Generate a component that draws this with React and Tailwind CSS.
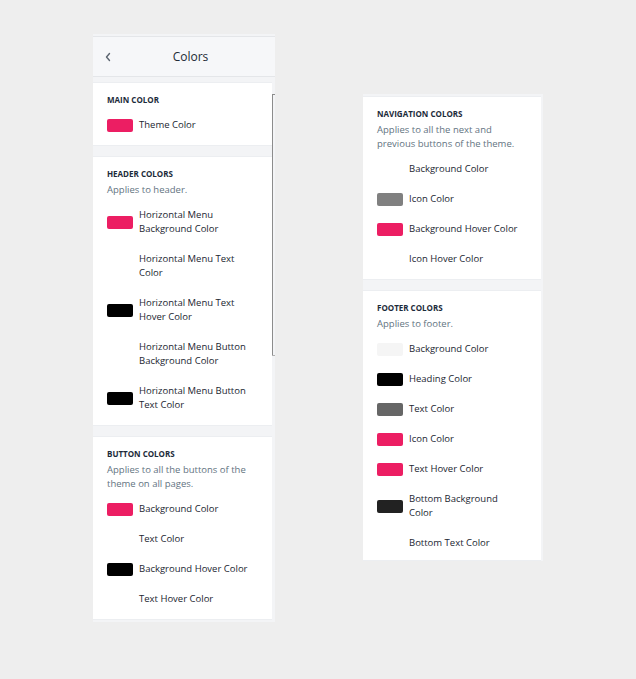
const PINK = '#ec1e63'

const leftSections = [
  {
    title: 'Main Color',
    rows: [{ label: 'Theme Color', color: PINK }],
  },
  {
    title: 'Header Colors',
    desc: 'Applies to header.',
    rows: [
      { label: 'Horizontal Menu Background Color', color: PINK },
      { label: 'Horizontal Menu Text Color', color: '#ffffff' },
      { label: 'Horizontal Menu Text Hover Color', color: '#000000' },
      { label: 'Horizontal Menu Button Background Color', color: '#ffffff' },
      { label: 'Horizontal Menu Button Text Color', color: '#000000' },
    ],
  },
  {
    title: 'Button Colors',
    desc: 'Applies to all the buttons of the theme on all pages.',
    rows: [
      { label: 'Background Color', color: PINK },
      { label: 'Text Color', color: '#ffffff' },
      { label: 'Background Hover Color', color: '#000000' },
      { label: 'Text Hover Color', color: '#ffffff' },
    ],
  },
]

const rightSections = [
  {
    title: 'Navigation Colors',
    desc: 'Applies to all the next and previous buttons of the theme.',
    rows: [
      { label: 'Background Color', color: '#ffffff' },
      { label: 'Icon Color', color: '#808080' },
      { label: 'Background Hover Color', color: PINK },
      { label: 'Icon Hover Color', color: '#ffffff' },
    ],
  },
  {
    title: 'Footer Colors',
    desc: 'Applies to footer.',
    last: true,
    rows: [
      { label: 'Background Color', color: '#f5f5f5' },
      { label: 'Heading Color', color: '#000000' },
      { label: 'Text Color', color: '#666666' },
      { label: 'Icon Color', color: PINK },
      { label: 'Text Hover Color', color: PINK },
      { label: 'Bottom Background Color', color: '#222222' },
      { label: 'Bottom Text Color', color: '#ffffff' },
    ],
  },
]

function ColorRow({ label, color }) {
  return (
    <div className="flex items-center py-[8px]">
      <span
        className="w-[26px] h-[13px] rounded-[2px] shrink-0"
        style={{ backgroundColor: color }}
      />
      <span className="ml-[6px] w-[112px] text-[9.5px] leading-[14px] text-[#1b2631]">
        {label}
      </span>
    </div>
  )
}

function Section({ title, desc, rows, last }) {
  return (
    <section
      className={`bg-white px-[14px] pt-[12px] border-y border-[#eceef1] ${last ? 'pb-[2px]' : 'pb-[5px]'}`}
    >
      <h3 className="text-[8px] leading-[10px] font-bold uppercase text-[#1c2b3a]">{title}</h3>
      {desc && (
        <p className="mt-[4px] w-[150px] text-[9.5px] leading-[14px] text-[#637381]">{desc}</p>
      )}
      <div className={desc ? 'mt-[3px]' : 'mt-[5px]'}>
        {rows.map((r) => (
          <ColorRow key={r.label} {...r} />
        ))}
      </div>
    </section>
  )
}

export default function App() {
  return (
    <div
      className="min-h-[679px] bg-[#eeeeee] flex items-start pl-[93px] pt-[34px]"
      style={{ fontFamily: '"Open Sans", "Liberation Sans", sans-serif' }}
    >
      {/* ── Left panel (scrolling settings sidebar) ── */}
      <div className="relative w-[182px] bg-[#f3f4f6] pt-[2px] pb-[2px] flex flex-col">
        <header className="h-[41px] bg-[#f6f7f9] border-t border-b border-[#e4e6e9] flex items-center">
          <svg
            className="ml-[11px] shrink-0"
            width="8"
            height="10"
            viewBox="0 0 8 10"
            fill="none"
            stroke="#5c6570"
            strokeWidth="1.4"
            strokeLinecap="round"
            strokeLinejoin="round"
          >
            <path d="M5.5 1.5 L2.5 5 L5.5 8.5" />
          </svg>
          <h2 className="flex-1 text-center pr-[6px] text-[12px] text-[#212b36]">Colors</h2>
        </header>
        <div className="pt-[5px] pr-[3px] flex flex-col gap-[10px]">
          {leftSections.map((s) => (
            <Section key={s.title} {...s} />
          ))}
        </div>
        {/* scrollbar */}
        <div className="absolute right-[2px] top-[60px] w-[1px] h-[262px] bg-[#8c8c8c]" />
        <div className="absolute right-[0px] top-[60px] w-[3px] h-[1px] bg-[#8c8c8c]" />
        <div className="absolute right-[0px] top-[321px] w-[3px] h-[1px] bg-[#b0b0b0]" />
      </div>

      {/* ── Right panel ── */}
      <div className="ml-[88px] mt-[60px] w-[180px] bg-[#f3f4f6] pt-[2px] pr-[2px] flex flex-col gap-[10px]">
        {rightSections.map((s) => (
          <Section key={s.title} {...s} />
        ))}
      </div>
    </div>
  )
}
